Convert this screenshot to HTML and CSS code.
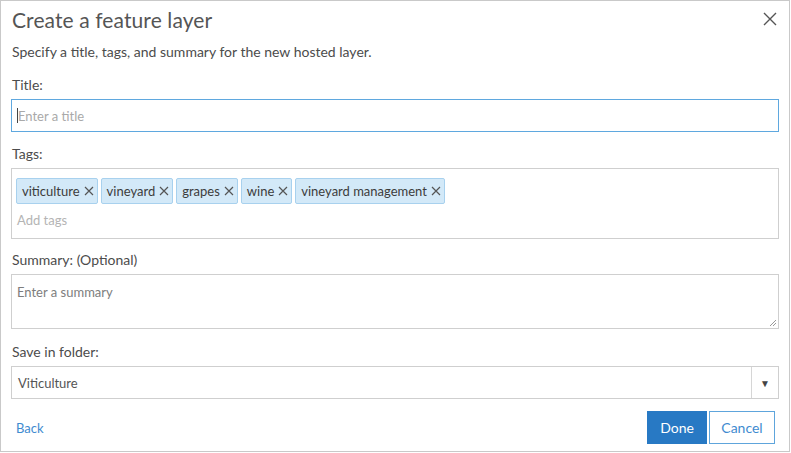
FILE: index.html
```html
<!DOCTYPE html>
<html>
<head>
<meta charset="utf-8">
<link rel="stylesheet" href="styles.css">
</head>
<body>
<div class="dialog">
  <div class="header">
    <h1 class="title">Create a feature layer</h1>
    <button class="close" aria-label="Close">
      <svg width="14" height="14" viewBox="0 0 14 14"><path d="M1 1L13 13M13 1L1 13" stroke="#555" stroke-width="1.4" fill="none"/></svg>
    </button>
  </div>
  <p class="intro">Specify a title, tags, and summary for the new hosted layer.</p>

  <label class="label">Title:</label>
  <div class="input focused"><span class="caret"></span><span class="placeholder light">Enter a title</span></div>

  <label class="label gap">Tags:</label>
  <div class="tagbox">
    <div class="tags">
      <span class="tag">viticulture<svg class="x" viewBox="0 0 10 10"><path d="M1 1L9 9M9 1L1 9"/></svg></span>
      <span class="tag">vineyard<svg class="x" viewBox="0 0 10 10"><path d="M1 1L9 9M9 1L1 9"/></svg></span>
      <span class="tag">grapes<svg class="x" viewBox="0 0 10 10"><path d="M1 1L9 9M9 1L1 9"/></svg></span>
      <span class="tag">wine<svg class="x" viewBox="0 0 10 10"><path d="M1 1L9 9M9 1L1 9"/></svg></span>
      <span class="tag">vineyard management<svg class="x" viewBox="0 0 10 10"><path d="M1 1L9 9M9 1L1 9"/></svg></span>
    </div>
    <div class="addtags">Add tags</div>
  </div>

  <label class="label gap2">Summary: (Optional)</label>
  <div class="textarea"><span class="placeholder dark">Enter a summary</span>
    <svg class="grip" width="8" height="8" viewBox="0 0 8 8"><path d="M7 1L1 7M7 4L4 7" stroke="#999" stroke-width="1"/></svg>
  </div>

  <label class="label gap3">Save in folder:</label>
  <div class="select">
    <span class="value">Viticulture</span>
    <span class="arrow">&#9660;</span>
  </div>

  <div class="footer">
    <a class="back" href="#">Back</a>
    <div class="buttons">
      <button class="btn primary">Done</button>
      <button class="btn secondary">Cancel</button>
    </div>
  </div>
</div>
</body>
</html>
```

FILE: styles.css
```css
html, body {
  margin: 0;
  padding: 0;
  background: #fff;
}
body {
  font-family: "Lato", "Open Sans", sans-serif;
  color: #4c4c4c;
}
.dialog {
  box-sizing: border-box;
  width: 790px;
  height: 452px;
  border: 1px solid #c9c9c9;
  padding: 0 10px;
  display: flex;
  flex-direction: column;
}
.header {
  height: 37px;
  display: flex;
  align-items: center;
  justify-content: space-between;
}
.title {
  margin: 0 0 0 1px;
  font-weight: 400;
  font-size: 21px;
  color: #555;
  letter-spacing: 0.1px;
}
.close {
  border: 0;
  background: none;
  padding: 0;
  margin: 0 2px 2px 0;
  width: 14px;
  height: 14px;
  display: flex;
}
.intro {
  margin: 4px 0 0 1px;
  font-size: 14px;
  line-height: 20px;
  color: #4c4c4c;
}
.label {
  display: block;
  margin: 13px 0 4px 1px;
  font-size: 14px;
  line-height: 20px;
  color: #4c4c4c;
}
.label.gap { margin-top: 12px; }
.label.gap2 { margin-top: 11px; }
.label.gap3 { margin-top: 13px; }
.input, .select {
  box-sizing: border-box;
  height: 33px;
  border: 1px solid #cfcfcf;
  display: flex;
  align-items: center;
  padding-left: 5px;
  font-size: 13px;
}
.input.focused {
  border-color: #5fa8df;
}
.caret {
  width: 1px;
  height: 15px;
  background: #444;
}
.placeholder.light { color: #a9a9a9; }
.placeholder.dark { color: #7d7d7d; }
.tagbox {
  box-sizing: border-box;
  height: 71px;
  border: 1px solid #cfcfcf;
  padding: 9px 4px 0 4px;
}
.tags {
  display: flex;
  gap: 3px;
}
.tag {
  box-sizing: border-box;
  height: 26px;
  display: inline-flex;
  align-items: center;
  gap: 4px;
  padding: 0 3px 0 5px;
  background: #d3e9f8;
  border: 1px solid #a8d1ee;
  border-radius: 2px;
  font-size: 13px;
  color: #3c3c3c;
}
.x {
  width: 10px;
  height: 10px;
  stroke: #555;
  stroke-width: 1.2;
  fill: none;
}
.addtags {
  margin-top: 8px;
  padding-left: 1px;
  font-size: 13px;
  color: #b4b4b4;
}
.textarea {
  position: relative;
  box-sizing: border-box;
  height: 55px;
  border: 1px solid #cfcfcf;
  padding: 9px 5px;
  font-size: 13px;
}
.grip {
  position: absolute;
  right: 1px;
  bottom: 1px;
}
.select {
  padding-left: 6px;
  justify-content: space-between;
  padding-right: 0;
}
.value {
  color: #555;
  font-size: 13px;
}
.arrow {
  box-sizing: border-box;
  height: 31px;
  width: 27px;
  border-left: 1px solid #d6d6d6;
  display: flex;
  align-items: center;
  justify-content: center;
  font-size: 10px;
  color: #444;
}
.footer {
  margin-top: 12px;
  display: flex;
  align-items: center;
  justify-content: space-between;
  padding-right: 4px;
}
.back {
  margin-left: 5px;
  color: #3f8bd0;
  text-decoration: none;
  font-size: 13px;
}
.buttons {
  display: flex;
  gap: 2px;
}
.btn {
  box-sizing: border-box;
  height: 33px;
  font-family: inherit;
  font-size: 14px;
  padding: 0 10px;
  border-radius: 0;
}
.primary {
  background: #2879c4;
  border: 1px solid #2879c4;
  color: #fff;
  width: 60px;
}
.secondary {
  background: #fff;
  border: 1px solid #5ea5dc;
  color: #3f8bd0;
  width: 66px;
}
```
